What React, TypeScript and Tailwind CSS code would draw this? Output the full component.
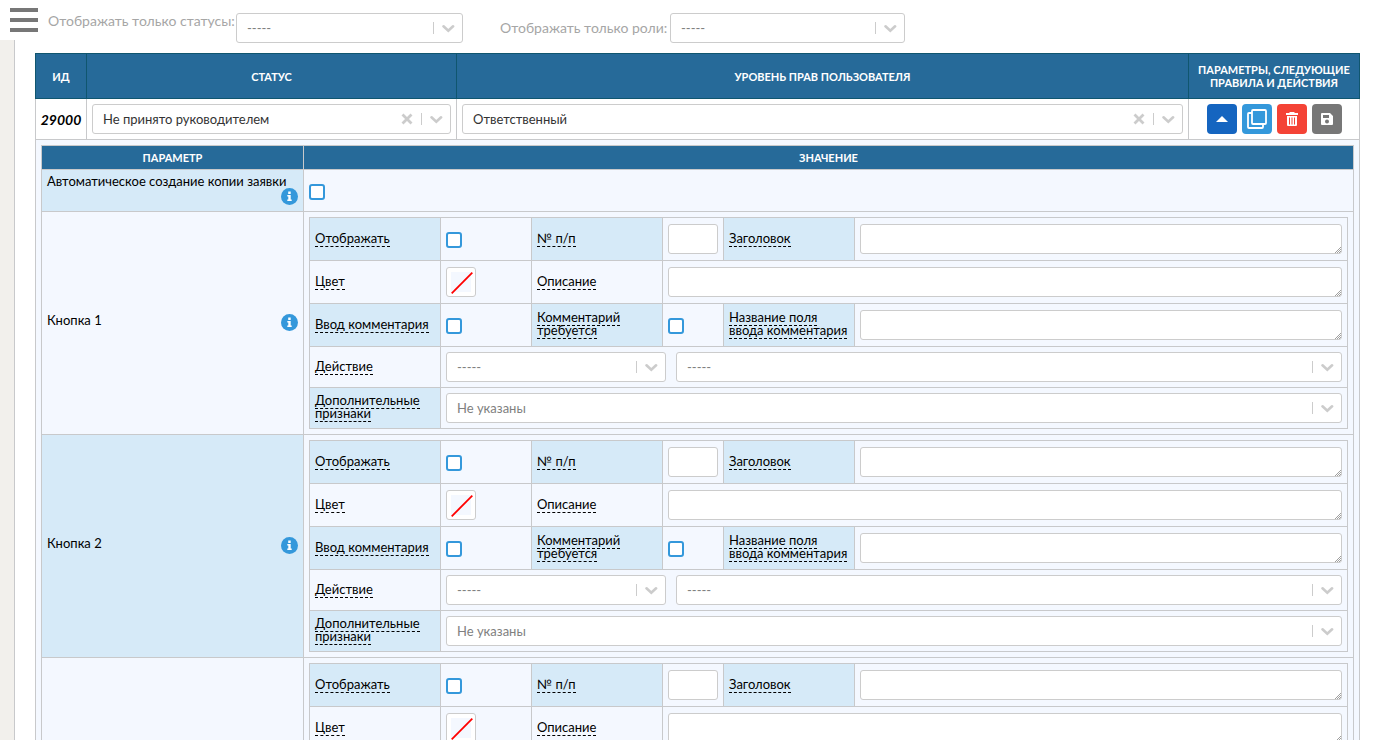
import { useState } from "react";
import type { ReactNode } from "react";

const BORDER = "border border-[#c8c9cb]";
const LABEL = `${BORDER} px-[5px] pt-0 pb-0.5`;
const CELL = `${BORDER} bg-[#f4f8ff] p-[5px]`;
const BLUE = "bg-[#d6eaf8]";
const LIGHT = "bg-[#f4f8ff]";

type SelectProps = {
  id?: string;
  label: string;
  options: string[];
  muted?: boolean;
  clearable?: boolean;
  className?: string;
};

function Select({ id, label, options, muted, clearable, className = "w-full" }: SelectProps) {
  return (
    <div className={`relative h-[30px] ${className}`}>
      <select
        id={id}
        aria-label={label}
        className={`block h-full w-full appearance-none rounded-[3px] border border-[#ccc] bg-white pl-[10px] pr-14 text-[13px] outline-none ${
          muted ? "text-[#808080]" : "text-[#333]"
        }`}
      >
        {options.map((o) => (
          <option key={o}>{o}</option>
        ))}
      </select>
      <div className="pointer-events-none absolute inset-y-0 right-0 flex items-center">
        {clearable && (
          <button type="button" aria-label="Очистить" className="pointer-events-auto mr-2 flex text-[#ccc]">
            <svg width="12" height="12" viewBox="0 0 12 12" fill="none" stroke="currentColor" strokeWidth="2.8">
              <path d="M1.5 1.5l9 9M10.5 1.5l-9 9" />
            </svg>
          </button>
        )}
        <span className="h-3 w-px bg-[#ccc]" />
        <svg className="mx-2 text-[#ccc]" width="13" height="13" viewBox="0 0 13 13" fill="none" stroke="currentColor" strokeWidth="2.6" strokeLinecap="round">
          <path d="M1.5 4.3l4.8 4.4 4.8-4.4" />
        </svg>
      </div>
    </div>
  );
}

function Checkbox({ label }: { label: string }) {
  return (
    <input
      type="checkbox"
      aria-label={label}
      className="mt-0.5 block h-4 w-4 appearance-none rounded-[3px] border-2 border-[#3498db] bg-white checked:bg-[#3498db]"
    />
  );
}

function TextArea({ label }: { label: string }) {
  return (
    <div className="relative my-px h-[30px]">
      <textarea
        aria-label={label}
        rows={1}
        className="block h-full w-full resize-none rounded-[3px] border border-[#ccc] bg-white px-2 py-1 outline-none"
      />
      <svg className="pointer-events-none absolute bottom-px right-px" width="6" height="6" viewBox="0 0 6 6" fill="none" stroke="#a0a0a0">
        <path d="M0 6L6 0M2 6L6 2M4 6L6 4" />
      </svg>
    </div>
  );
}

function Hint({ children }: { children: ReactNode }) {
  return <span className="border-b border-dashed border-black">{children}</span>;
}

function InfoIcon() {
  return (
    <button type="button" aria-label="Справка" className="block shrink-0">
      <svg width="17" height="17" viewBox="0 0 17 17">
        <circle cx="8.5" cy="8.5" r="8.5" fill="#3498db" />
        <path fill="#fff" d="M7.2 3.6h2.5v2.3H7.2zM6.3 7h3.4v4.6h1v1.5H6.3v-1.5h1V8.5h-1z" />
      </svg>
    </button>
  );
}

function ButtonParams() {
  return (
    <table className="w-full table-fixed border-collapse">
      <colgroup>
        <col className="w-[131px]" />
        <col className="w-[91px]" />
        <col className="w-[131px]" />
        <col className="w-[61px]" />
        <col className="w-[131px]" />
        <col />
      </colgroup>
      <tbody>
        <tr>
          <td className={`${LABEL} ${BLUE}`}><Hint>Отображать</Hint></td>
          <td className={CELL}><Checkbox label="Отображать" /></td>
          <td className={`${LABEL} ${BLUE}`}><Hint>№ п/п</Hint></td>
          <td className={CELL}>
            <input type="text" aria-label="№ п/п" className="my-px block h-[30px] w-full rounded-[3px] border border-[#ccc] bg-white px-1 outline-none" />
          </td>
          <td className={`${LABEL} ${BLUE}`}><Hint>Заголовок</Hint></td>
          <td className={CELL}><TextArea label="Заголовок" /></td>
        </tr>
        <tr>
          <td className={`${LABEL} ${LIGHT}`}><Hint>Цвет</Hint></td>
          <td className={CELL}>
            <button type="button" aria-label="Цвет" className="my-px block h-[30px] w-[30px] rounded-[3px] border border-[#ccc] bg-white p-1">
              <svg width="22" height="22" viewBox="0 0 22 22">
                <path d="M0 0h20v20H0z" fill="#f4f8ff" />
                <path d="M.7 21.3L21.3 .7" stroke="#f00" strokeWidth="1.8" />
              </svg>
            </button>
          </td>
          <td className={`${LABEL} ${LIGHT}`}><Hint>Описание</Hint></td>
          <td className={CELL} colSpan={3}><TextArea label="Описание" /></td>
        </tr>
        <tr>
          <td className={`${LABEL} ${BLUE}`}><Hint>Ввод комментария</Hint></td>
          <td className={CELL}><Checkbox label="Ввод комментария" /></td>
          <td className={`${LABEL} ${BLUE}`}><Hint>Комментарий требуется</Hint></td>
          <td className={CELL}><Checkbox label="Комментарий требуется" /></td>
          <td className={`${LABEL} ${BLUE}`}><Hint>Название поля ввода комментария</Hint></td>
          <td className={CELL}><TextArea label="Название поля ввода комментария" /></td>
        </tr>
        <tr>
          <td className={`${LABEL} ${LIGHT}`}><Hint>Действие</Hint></td>
          <td className={CELL} colSpan={5}>
            <div className="flex gap-[10px]">
              <Select label="Действие" options={["-----"]} muted className="w-[220px]" />
              <Select label="Параметр действия" options={["-----"]} muted className="flex-1" />
            </div>
          </td>
        </tr>
        <tr>
          <td className={`${LABEL} ${BLUE}`}><Hint>Дополнительные признаки</Hint></td>
          <td className={CELL} colSpan={5}>
            <Select label="Дополнительные признаки" options={["Не указаны"]} muted />
          </td>
        </tr>
      </tbody>
    </table>
  );
}

function ParamsTable() {
  return (
    <table className="w-full table-fixed border-collapse">
      <colgroup>
        <col className="w-[262px]" />
        <col />
      </colgroup>
      <thead>
        <tr className="h-6 bg-[#266a99] text-[11px] text-white">
          <th className={`${BORDER} font-bold`}>ПАРАМЕТР</th>
          <th className={`${BORDER} font-bold`}>ЗНАЧЕНИЕ</th>
        </tr>
      </thead>
      <tbody>
        <tr className="h-[42px]">
          <td className={`${BORDER} p-[5px] align-top ${BLUE}`}>
            <div className="whitespace-nowrap">Автоматическое создание копии заявки</div>
            <div className="flex justify-end"><InfoIcon /></div>
          </td>
          <td className={CELL}><Checkbox label="Автоматическое создание копии заявки" /></td>
        </tr>
        {[1, 2, 3].map((n) => (
          <tr key={n}>
            <td className={`${BORDER} px-[5px] pb-0.5 ${n % 2 ? LIGHT : BLUE}`}>
              <div className="flex items-start justify-between">
                <span>Кнопка {n}</span>
                <InfoIcon />
              </div>
            </td>
            <td className={CELL}><ButtonParams /></td>
          </tr>
        ))}
      </tbody>
    </table>
  );
}

const HEAD = "border border-[#10566f] font-bold";
const ACTION = "flex h-[30px] w-[30px] items-center justify-center rounded-[4px] text-white";

export default function App() {
  const [open, setOpen] = useState(true);

  return (
    <div className="flex h-screen overflow-hidden bg-white font-['Lato','Noto_Sans',sans-serif] text-[13px] leading-[13px] text-black">
      <aside className="mt-10 w-[15px] shrink-0 border-r border-[#c8c9cb] bg-[#f2f0ec]" />
      <button type="button" aria-label="Меню" className="absolute left-[10px] top-2 flex w-7 flex-col gap-[6px]">
        <span className="h-1 w-full bg-[#777]" />
        <span className="h-1 w-full bg-[#777]" />
        <span className="h-1 w-full bg-[#777]" />
      </button>
      <main className="min-w-0 flex-1 px-5">
        <div className="flex h-[53px] items-start whitespace-nowrap pl-[13px] pt-[13px] text-[14px] text-[#a6a6a6]">
          <label htmlFor="status" className="w-[188px] leading-4">Отображать только статусы:</label>
          <Select id="status" label="Отображать только статусы" options={["-----"]} muted className="w-[227px]" />
          <label htmlFor="role" className="ml-[37px] w-[170px] leading-[30px]">Отображать только роли:</label>
          <Select id="role" label="Отображать только роли" options={["-----"]} muted className="w-[235px]" />
        </div>
        <table className="w-full table-fixed border-collapse">
          <colgroup>
            <col className="w-[51px]" />
            <col className="w-[370px]" />
            <col />
            <col className="w-[171px]" />
          </colgroup>
          <thead>
            <tr className="h-[45px] bg-[#266a99] text-[11px] text-white">
              <th className={HEAD}>ИД</th>
              <th className={HEAD}>СТАТУС</th>
              <th className={HEAD}>УРОВЕНЬ ПРАВ ПОЛЬЗОВАТЕЛЯ</th>
              <th className={HEAD}>ПАРАМЕТРЫ, СЛЕДУЮЩИЕ ПРАВИЛА И ДЕЙСТВИЯ</th>
            </tr>
          </thead>
          <tbody>
            <tr>
              <td className={`${BORDER} text-center text-[14px] font-bold italic`}>29000</td>
              <td className={`${BORDER} p-[5px]`}>
                <Select label="Статус" options={["Не принято руководителем"]} clearable />
              </td>
              <td className={`${BORDER} p-[5px]`}>
                <Select label="Уровень прав пользователя" options={["Ответственный"]} clearable />
              </td>
              <td className={`${BORDER} p-[5px]`}>
                <div className="flex justify-center gap-[5px]">
                  <button type="button" aria-label="Свернуть" onClick={() => setOpen(!open)} className={`${ACTION} bg-[#1565c0]`}>
                    <svg width="12" height="6" viewBox="0 0 12 6"><path d="M6 0l6 6H0z" fill="currentColor" /></svg>
                  </button>
                  <button type="button" aria-label="Копировать" className={`${ACTION} bg-[#3498db]`}>
                    <svg width="20" height="20" viewBox="0 0 20 20" fill="none" stroke="currentColor" strokeWidth="1.8">
                      <rect x="5" y="1" width="14" height="14" rx="1" />
                      <path d="M5 4H2a1 1 0 0 0-1 1v13a1 1 0 0 0 1 1h13a1 1 0 0 0 1-1v-3" />
                    </svg>
                  </button>
                  <button type="button" aria-label="Удалить" className={`${ACTION} bg-[#f44336]`}>
                    <svg width="14" height="16" viewBox="0 0 14 16" fill="currentColor">
                      <path d="M1 2h3.5V1h5v1H13v2H1zM2 5h10v9a1 1 0 0 1-1 1H3a1 1 0 0 1-1-1z" />
                      <path d="M4.5 6.500v7M7 6.500v7M9.500 6.500v7" stroke="#f44336" />
                    </svg>
                  </button>
                  <button type="button" aria-label="Сохранить" className={`${ACTION} bg-[#777]`}>
                    <svg width="14" height="14" viewBox="0 0 14 14">
                      <path fill="currentColor" fillRule="evenodd" d="M2 1h8l3 3v8a1 1 0 0 1-1 1H2a1 1 0 0 1-1-1V2a1 1 0 0 1 1-1zM3 3v3h6V3zM7 7.500a2 2 0 1 0 0 4 2 2 0 0 0 0-4z" />
                    </svg>
                  </button>
                </div>
              </td>
            </tr>
            {open && (
              <tr>
                <td colSpan={4} className={CELL}><ParamsTable /></td>
              </tr>
            )}
          </tbody>
        </table>
      </main>
    </div>
  );
}
